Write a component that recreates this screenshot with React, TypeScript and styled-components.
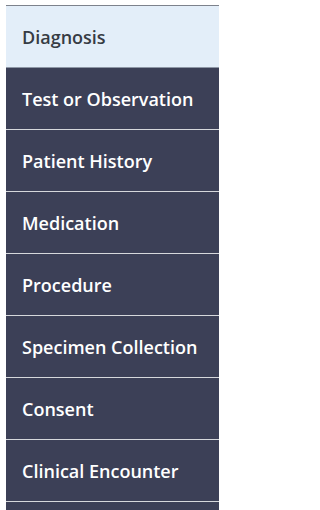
import styled, { createGlobalStyle } from "styled-components"

const GlobalStyle = createGlobalStyle`
  html, body {
    margin: 0;
    padding: 0;
    background: #ffffff;
    overflow: hidden;
  }
`

const Page = styled.div`
  height: 510px;
  padding: 5px 0 0 6px;
  box-sizing: border-box;
  overflow: hidden;
  font-family: "Open Sans", "Noto Sans", sans-serif;
`

const Menu = styled.ul`
  list-style: none;
  margin: 0;
  padding: 0;
  width: 213px;
  border-top: 1px solid #7d828c;
`

const MenuItem = styled.li<{ $active?: boolean }>`
  height: 62px;
  display: flex;
  align-items: center;
  padding-left: 16px;
  box-sizing: border-box;
  background: ${(p) => (p.$active ? "#e3eef9" : "#3c4057")};
  color: ${(p) => (p.$active ? "#363b44" : "#ffffff")};
  border-bottom: 1px solid ${(p) => (p.$active ? "#8e97a6" : "#d6d8dc")};
  font-size: 18px;
  font-weight: 600;
  white-space: nowrap;
  cursor: pointer;
`

const items = [
  "Diagnosis",
  "Test or Observation",
  "Patient History",
  "Medication",
  "Procedure",
  "Specimen Collection",
  "Consent",
  "Clinical Encounter",
]

export default function App() {
  return (
    <>
      <GlobalStyle />
      <Page>
        <Menu>
          {items.map((name, i) => (
            <MenuItem key={name} $active={i === 0}>
              {name}
            </MenuItem>
          ))}
          <MenuItem aria-hidden />
        </Menu>
      </Page>
    </>
  )
}
